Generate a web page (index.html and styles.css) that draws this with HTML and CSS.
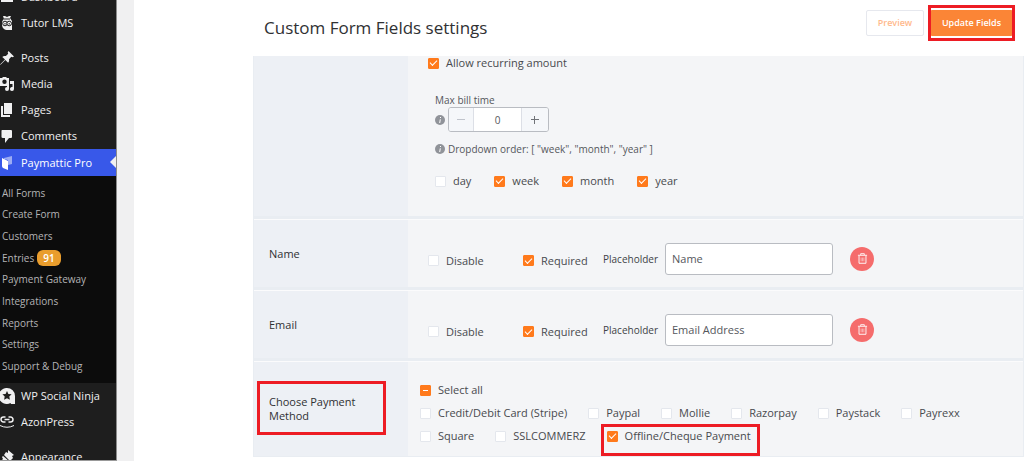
FILE: index.html
```html
<!DOCTYPE html>
<html lang="en">
<head>
<meta charset="utf-8">
<title>Custom Form Fields settings</title>
<link rel="stylesheet" href="styles.css">
</head>
<body>
<div class="app">
  <nav class="sidebar">
    <a class="item" href="#"><svg class="icon" viewBox="0 0 14 14"><path d="M1 2h12v10H1z"/></svg>Dashboard</a>
    <a class="item" href="#"><svg class="icon" viewBox="0 0 14 14"><path d="M3 0h2l2 1 2-1h2l-1 2 2 3v9H8C4 14 2 12 2 8c0-2 0-3 2-5z"/><path class="cut" d="M4 2.500h6v1H4z"/><circle class="hole" cx="5" cy="7.500" r="2.300"/><circle class="hole" cx="9.200" cy="7.500" r="2.300"/><path class="cut" d="M4.500 7h1v1.500h-1zM8.700 7h1v1.500h-1z"/></svg>Tutor LMS</a>
    <a class="item gap" href="#"><svg class="icon" viewBox="0 0 14 14"><path d="M8.500 0 14 5.500l-1.500.8-1.200-.5-2.300 2.400c.4 1.500 0 2.800-.9 3.500L5.400 9 .8 13.500 0 14l.5-1L5 8.500 2.300 5.900c.9-.9 2.200-1.200 3.600-.8l2.300-2.400-.5-1.200z"/></svg>Posts</a>
    <a class="item" href="#"><svg class="icon" viewBox="0 0 14 14"><path d="M0 1h2l1-1h3l1 1h2v8H0z"/><circle class="cut" cx="4.500" cy="4.800" r="2.200"/><path d="M10 4h4v8a2 2 0 1 1-1.500-2V7H10zM7 7h2v5a2 2 0 1 1-2-2z"/></svg>Media</a>
    <a class="item" href="#"><svg class="icon" viewBox="0 0 14 14"><path d="M4 0h8v11H4z"/><path d="M1 3h2v9h7v2H1z"/></svg>Pages</a>
    <a class="item" href="#"><svg class="icon" viewBox="0 0 14 14"><path d="M2 1h9q1 0 1 1v6q0 1-1 1H9l-4 5V9H3Q1.500 9 1.500 8V2q0-1 .5-1z"/></svg>Comments</a>
    <a class="item active" href="#"><svg class="icon" viewBox="0 0 14 14"><path opacity=".5" d="M4 2l8-2v8L8 9V4L4 3z"/><path d="M2 2l6 3v9l-5-2q-1-1-1-2z"/></svg>Paymattic Pro</a>
    <div class="submenu">
      <a href="#">All Forms</a>
      <a href="#">Create Form</a>
      <a href="#">Customers</a>
      <a href="#">Entries <span class="count">91</span></a>
      <a href="#">Payment Gateway</a>
      <a href="#">Integrations</a>
      <a href="#">Reports</a>
      <a href="#">Settings</a>
      <a href="#">Support &amp; Debug</a>
    </div>
    <a class="item" href="#"><svg class="icon big" viewBox="0 0 16 16"><path d="M8 0a8 8 0 0 1 8 8v8h-4l-.5-1A8 8 0 1 1 8 0z"/><path class="cut" d="m8 3 1.400 2.900 3.200.4-2.300 2.200.6 3.200L8 10.200l-2.900 1.500.6-3.200-2.300-2.200 3.200-.4z"/></svg>WP Social Ninja</a>
    <a class="item" href="#"><svg class="icon line" viewBox="0 0 14 14"><path d="M5.500 7H3.500a2.500 2.500 0 0 1 0-5h2M8.500 2h2a2.500 2.500 0 0 1 0 5h-2M4.500 4.500h5"/><path class="thin" d="M0 10.500q7 3.500 14 0"/></svg>AzonPress</a>
    <a class="item gap" href="#"><svg class="icon" viewBox="0 0 14 14"><path d="M8 0l6 5-2 1 1 2-3 3-6-6 2-3 2 1zM3 6l6 5-2 1-2-1-4 3-1-2 3-3-1-2z"/></svg>Appearance</a>
  </nav>

  <main class="main">
    <header class="header">
      <h1>Custom Form Fields settings</h1>
      <button class="btn preview" type="button">Preview</button>
      <button class="btn update marked" type="button">Update Fields</button>
    </header>

    <div class="fields">
      <section class="row first">
        <div class="label"></div>
        <div class="content recurring">
          <label class="check"><input type="checkbox" checked>Allow recurring amount</label>
          <div class="billing">
            <label class="small" for="bill">Max bill time</label>
            <div class="stepline">
              <svg class="info" viewBox="0 0 10 10"><circle cx="5" cy="5" r="5"/><path d="M5.500 2v1M5.300 4.300 4.700 8"/></svg>
              <div class="stepper">
                <button type="button" aria-label="Decrease" disabled><svg viewBox="0 0 8 8"><path d="M0 3.500h8"/></svg></button>
                <input id="bill" type="text" value="0">
                <button type="button" aria-label="Increase"><svg viewBox="0 0 8 8"><path d="M0 3.500h8M3.500 0v8"/></svg></button>
              </div>
            </div>
            <p class="order"><svg class="info" viewBox="0 0 10 10"><circle cx="5" cy="5" r="5"/><path d="M5.500 2v1M5.300 4.300 4.700 8"/></svg>Dropdown order: [ "week", "month", "year" ]</p>
            <div class="periods">
              <label class="check"><input type="checkbox">day</label>
              <label class="check"><input type="checkbox" checked>week</label>
              <label class="check"><input type="checkbox" checked>month</label>
              <label class="check"><input type="checkbox" checked>year</label>
            </div>
          </div>
        </div>
      </section>

      <section class="row">
        <div class="label">Name</div>
        <div class="content basic">
          <label class="check disable"><input type="checkbox">Disable</label>
          <label class="check required"><input type="checkbox" checked>Required</label>
          <label class="caption" for="name">Placeholder</label>
          <input class="text" id="name" type="text" value="Name">
          <button class="delete" type="button" aria-label="Delete name field"><svg viewBox="0 0 12 12"><path d="M1 2.500h10M4 2V.8h4V2M2.200 3v8.200h7.600V3"/><path class="bars" d="M4.500 5v4M6 5v4M7.500 5v4"/></svg></button>
        </div>
      </section>

      <section class="row">
        <div class="label">Email</div>
        <div class="content basic">
          <label class="check disable"><input type="checkbox">Disable</label>
          <label class="check required"><input type="checkbox" checked>Required</label>
          <label class="caption" for="email">Placeholder</label>
          <input class="text" id="email" type="text" value="Email Address">
          <button class="delete" type="button" aria-label="Delete email field"><svg viewBox="0 0 12 12"><path d="M1 2.500h10M4 2V.8h4V2M2.200 3v8.200h7.600V3"/><path class="bars" d="M4.500 5v4M6 5v4M7.500 5v4"/></svg></button>
        </div>
      </section>

      <section class="row last">
        <div class="label"><span class="method marked">Choose Payment Method</span></div>
        <div class="content payments">
          <label class="check"><input class="partial" type="checkbox">Select all</label>
          <div class="options">
            <label class="check"><input type="checkbox">Credit/Debit Card (Stripe)</label>
            <label class="check"><input type="checkbox">Paypal</label>
            <label class="check"><input type="checkbox">Mollie</label>
            <label class="check"><input type="checkbox">Razorpay</label>
            <label class="check"><input type="checkbox">Paystack</label>
            <label class="check"><input type="checkbox">Payrexx</label>
          </div>
          <div class="options">
            <label class="check"><input type="checkbox">Square</label>
            <label class="check"><input type="checkbox">SSLCOMMERZ</label>
            <label class="check offline marked"><input type="checkbox" checked>Offline/Cheque Payment</label>
          </div>
        </div>
      </section>
    </div>
  </main>
</div>
</body>
</html>
```
FILE: styles.css
```css
* { box-sizing: border-box; }
body {
  margin: 0;
  background: #fff;
  color: #55575c;
  font: 11px/16px "Open Sans", "Noto Sans", sans-serif;
}
button, input { font: inherit; color: inherit; }

.app {
  display: flex;
  height: calc(100vh - 5px);
  overflow: hidden;
}

/* Sidebar */
.sidebar {
  flex: none;
  width: 117px;
  padding-right: 1px;
  background: linear-gradient(to left, #8c8c8c 1px, #1e1e1e 1px);
  border-bottom: 1px solid #999;
  overflow: hidden;
}
.item {
  display: flex;
  align-items: center;
  gap: 7px;
  height: 26px;
  color: #f0f0f1;
  font-size: 11px;
  text-decoration: none;
  white-space: nowrap;
}
.item:first-child { margin-top: -16px; }
.item.gap { margin-top: 9px; }
.item.active {
  position: relative;
  height: 27px;
  background: #3858e9;
  color: #fff;
}
.item.active::after {
  content: "";
  position: absolute;
  right: 0;
  top: 7px;
  border: 6px solid transparent;
  border-left: 0;
  border-right-color: #f0f0f1;
}
.icon { width: 14px; height: 14px; fill: currentColor; flex: none; }
.icon.big { width: 16px; height: 16px; margin-left: -1px; margin-right: -1px; }
.icon .cut { fill: #1e1e1e; }
.icon .hole { fill: #f0f0f1; stroke: #1e1e1e; }
.icon.line { fill: none; stroke: currentColor; stroke-width: 1.500; }
.icon.line .thin { stroke-width: 1; }
.submenu {
  display: grid;
  height: 207px;
  padding: 6px 2px;
  background: #0c0c0c;
  font-size: 10px;
}
.submenu a {
  display: flex;
  align-items: center;
  gap: 3px;
  color: #b4b4b6;
  text-decoration: none;
}
.count {
  padding: 0 6px;
  border-radius: 6px;
  background: #e99d2d;
  color: #fff;
  font-weight: 600;
}

/* Main */
.main {
  flex: 1;
  min-width: 0;
  border-left: 17px solid #f0f0f1;
  padding-left: 119px;
}
.header {
  display: flex;
  align-items: center;
  height: 56px;
  padding: 0 11px 11px;
}
h1 {
  flex: 1;
  margin: 0;
  padding-top: 10px;
  color: #303133;
  font-size: 17px;
  font-weight: 400;
  line-height: 24px;
}
.btn {
  height: 26px;
  padding: 0;
  border-radius: 2px;
  font-size: 9px;
  font-weight: 600;
}
.preview {
  width: 58px;
  margin-right: 6px;
  border: 1px solid #e6e8ee;
  background: #fff;
  color: #ffb98c;
}
.update {
  width: 83px;
  border: 0;
  background: #fb8536;
  color: #fff;
}
.marked { position: relative; }
.marked::after {
  content: "";
  position: absolute;
  inset: -5px -2px;
  border: 3px solid #ed1c24;
  pointer-events: none;
}

.fields {
  border: 1px solid #e9edf2;
  border-top: 0;
  background: #f4f5f7;
}
.row {
  display: grid;
  grid-template-columns: 154px 1fr;
  min-height: 71px;
  border-top: 1px solid #fbfbfc;
  border-bottom: 3px solid #e9edf2;
}
.row.first { min-height: 163px; border-top: 0; }
.row.last { min-height: 95px; border-bottom: 0; }
.label {
  display: flex;
  align-items: center;
  padding: 0 15px;
  background: #edf0f5;
  color: #303133;
  font-size: 11px;
  font-weight: 500;
  line-height: 14px;
}
.method { width: 100px; }
.method.marked::after { inset: -14px -17px -12px -12px; }

.check {
  display: flex;
  align-items: center;
  gap: 7px;
  color: #484a4e;
  font-size: 11px;
  font-weight: 500;
  white-space: nowrap;
}
.check input {
  display: grid;
  place-items: center;
  flex: none;
  appearance: none;
  width: 11px;
  height: 11px;
  margin: 0;
  border: 1px solid #e4e7ed;
  border-radius: 1px;
  background: #fff;
}
.check input:checked, .check .partial { border-color: #ff7a1c; background: #ff7a1c; }
.check input:checked::after {
  content: "";
  width: 6px;
  height: 3px;
  border: solid #fff;
  border-width: 0 0 1px 1px;
  transform: translateY(-1px) rotate(-45deg);
}
.check .partial::after { content: ""; width: 5px; height: 1px; background: #fff; }

.recurring { padding: 0 20px; }
.recurring > .check { height: 14px; }
.billing { padding: 23px 7px 0; }
.small { display: block; font-size: 10px; line-height: 14px; }
.stepline { display: flex; align-items: center; gap: 3px; }
.info { width: 10px; height: 10px; flex: none; fill: #909399; stroke: #fff; }
.info circle { stroke: none; }
.stepper {
  display: grid;
  grid-template-columns: 24px 49px 26px;
  height: 25px;
  overflow: hidden;
  border: 1px solid #b9bcc2;
  border-radius: 3px;
}
.stepper button {
  display: grid;
  place-items: center;
  padding: 0;
  border: 0;
  background: #f5f7fa;
}
.stepper button svg { width: 8px; height: 8px; stroke: #707378; }
.stepper button:disabled svg { stroke: #c0c4cc; }
.stepper input {
  width: 100%;
  min-width: 0;
  border: solid #dcdfe6;
  border-width: 0 1px;
  padding: 0;
  background: #fff;
  font-size: 10px;
  text-align: center;
}
.order {
  display: flex;
  align-items: center;
  gap: 3px;
  margin: 9px 0 16px;
  font-size: 10px;
}
.periods { display: flex; gap: 23px; }

.basic { display: flex; align-items: center; padding: 10px 20px 0; }
.basic .check { padding-top: 4px; }
.disable { width: 95px; }
.required { width: 80px; }
.caption { width: 62px; color: #404246; font-size: 10px; font-weight: 500; }
.text {
  width: 168px;
  height: 32px;
  padding: 0 6px;
  border: 1px solid #b9bcc2;
  border-radius: 3px;
  background: #fff;
  font-size: 11px;
}
.delete {
  display: grid;
  place-items: center;
  width: 24px;
  height: 24px;
  margin-left: 17px;
  padding: 0;
  border: 0;
  border-radius: 50%;
  background: #f56c6c;
}
.delete svg { width: 11px; height: 11px; fill: none; stroke: #fff; }
.delete .bars { stroke-width: .5; }

.payments {
  display: flex;
  flex-direction: column;
  gap: 7px;
  padding: 20px 12px 8px;
}
.options { display: flex; gap: 21px; }
.offline.marked::after { inset: -4px -9px -12px -6px; }
```
